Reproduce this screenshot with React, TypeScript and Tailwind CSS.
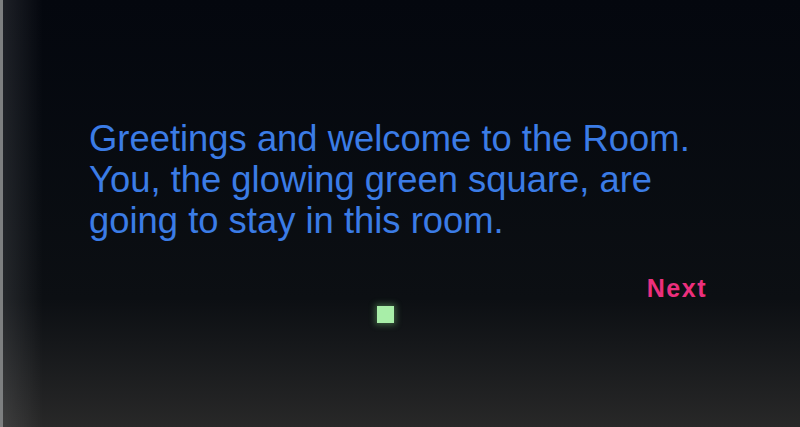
import React from 'react';

const App: React.FC = () => {
  return (
    <div
      className="relative w-[800px] h-[427px] overflow-hidden bg-gradient-to-b from-[#04070e] via-[#0c0f13] via-70% to-[#282828] border-l-[3px] border-[#7d7f80]"
      style={{ fontFamily: '"Liberation Sans", Arial, sans-serif' }}
    >
      {/* left vignette */}
      <div className="absolute inset-y-0 left-0 w-[40px] bg-gradient-to-r from-[#ffffff1a] to-transparent pointer-events-none" />

      <div className="relative flex flex-col pt-[118px] pl-[86px]">
        <p className="max-w-[625px] text-[36.4px] leading-[41px] text-[#3b7ce6]">
          Greetings and welcome to the Room. You, the glowing green square, are going to stay in this room.
        </p>

        <div className="flex justify-end w-[618px] mt-[33px]">
          <button className="text-[25px] leading-[28px] font-bold text-[#ec2f7d] tracking-[1.5px]">Next</button>
        </div>

        <div className="ml-[288px] mt-[4px] w-[17px] h-[17px] bg-[#a8eea8] shadow-[0_0_6px_2px_rgba(140,230,140,0.35)]" />
      </div>
    </div>
  );
};

export default App;
